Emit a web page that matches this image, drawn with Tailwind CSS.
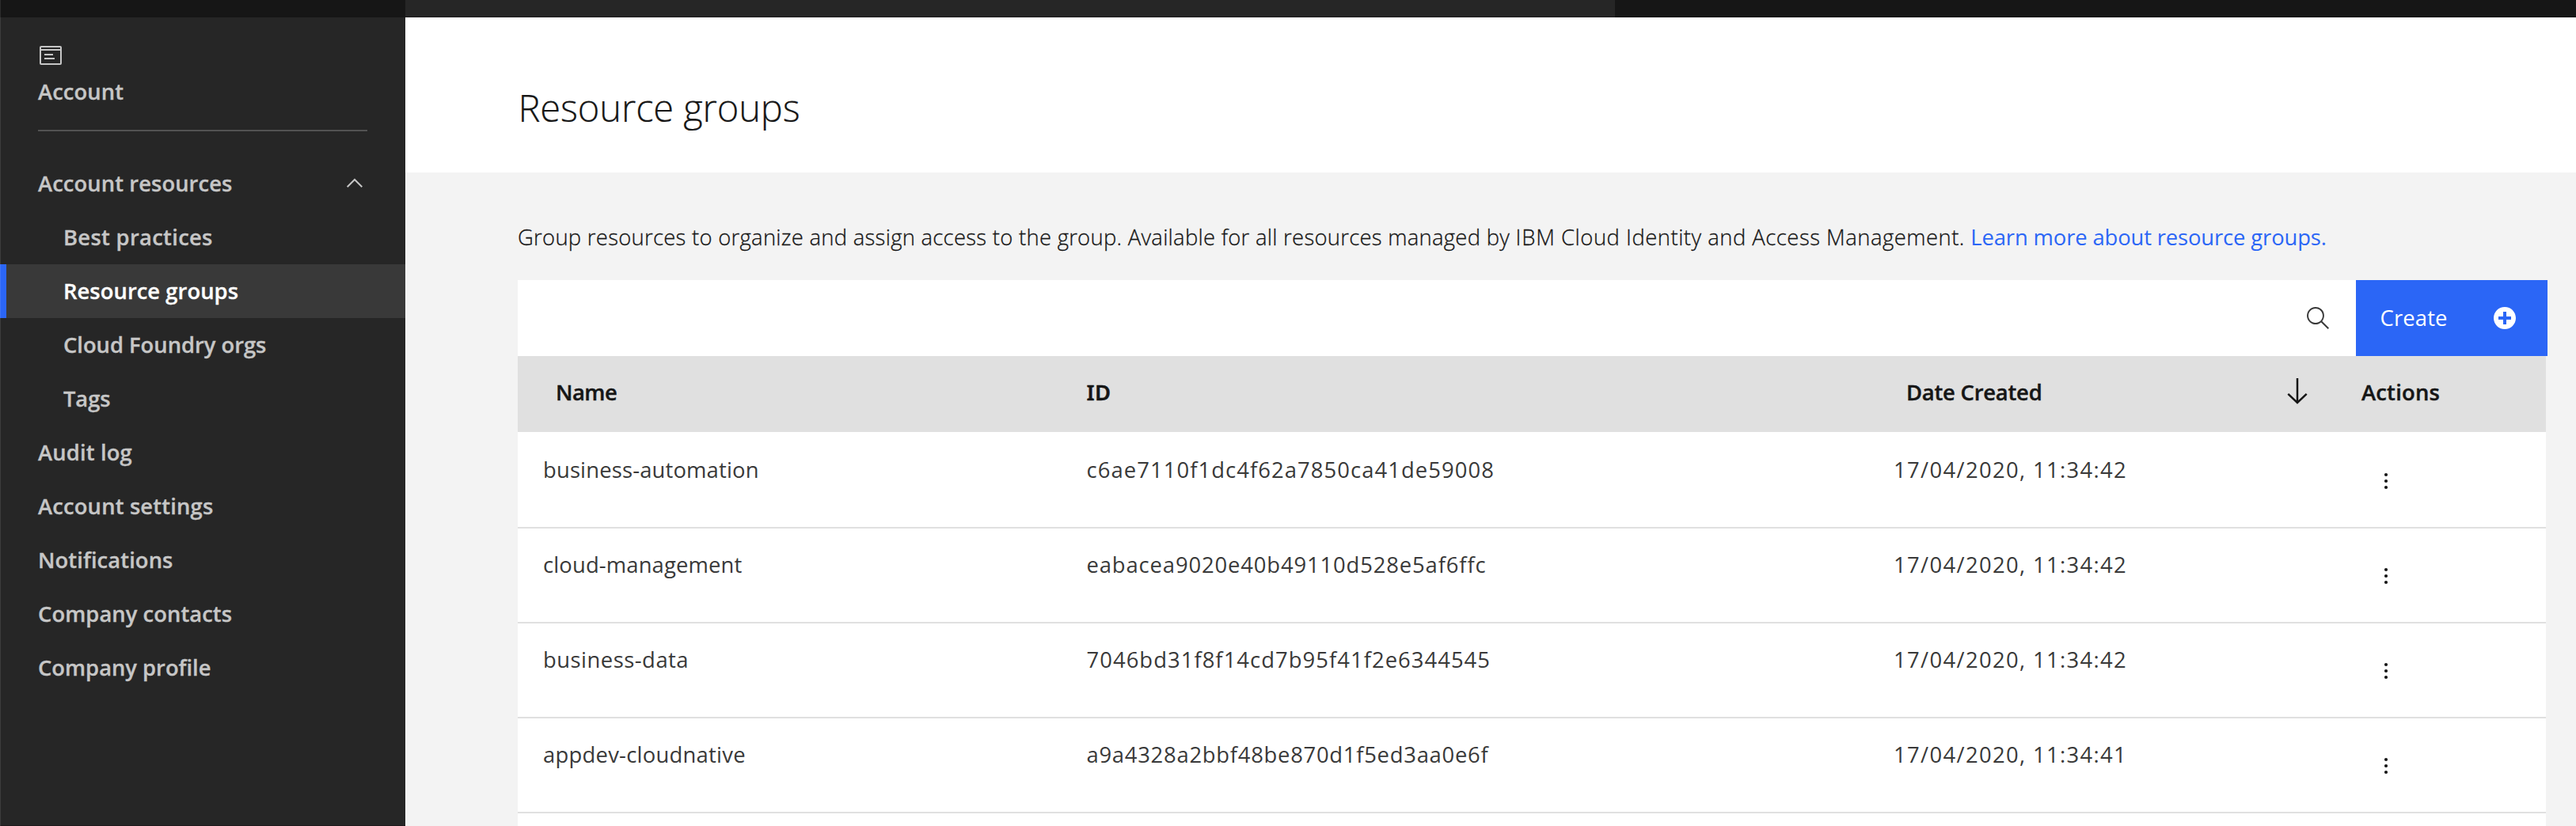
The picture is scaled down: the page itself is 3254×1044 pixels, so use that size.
<!DOCTYPE html>
<html lang="en">
<head>
<meta charset="utf-8">
<title>Resource groups</title>
<script src="https://cdn.jsdelivr.net/npm/@tailwindcss/browser@4"></script>
</head>
<body class="h-[1044px] w-[3254px] overflow-hidden bg-[#f3f3f3] font-['Open_Sans',sans-serif] text-[27.4px] leading-[37px] whitespace-nowrap">
<div class="relative flex h-[1044px] flex-col overflow-hidden">
  <!-- Global header -->
  <header class="flex h-[22px] shrink-0">
    <div class="w-[512px] bg-[#161616]"></div>
    <div class="w-[1528px] border-b border-[#1f1d1f] bg-[#262626]"></div>
    <div class="flex-1 border-b border-[#0f0d0f] bg-[#161616]"></div>
  </header>

  <div class="flex min-h-0 flex-1">
    <!-- Side navigation -->
    <nav class="flex w-[512px] shrink-0 flex-col border-b border-[#1f1a1c] bg-[#262626] font-semibold text-[#c6c6c6] [-webkit-text-stroke:0.3px]">
      <div class="mx-[48px] h-[144px] border-b-2 border-[#525252] pt-[34px]">
        <svg class="block h-[28px] w-[32px]" viewBox="0 0 32 28" fill="none" stroke="currentColor" stroke-width="2">
          <rect x="3" y="3" width="26" height="22" rx="1"/>
          <path d="M3 7h26M8 13h11M8 18h13"/>
        </svg>
        <div class="mt-[13px] tracking-[0.05px]">Account</div>
      </div>
      <div class="mt-[32px] flex h-[68px] justify-between pt-[15px] pr-[48px] pl-[48px]">
        <span class="tracking-[0.06px]">Account resources</span>
        <svg class="mt-[3px] h-[32px] w-[32px]" viewBox="0 0 32 32" fill="none" stroke="currentColor" stroke-width="2"><path d="M6.7 20.3 16 11l9.3 9.3"/></svg>
      </div>
      <a class="h-[68px] pt-[15px] pl-[80px] tracking-[0.29px]">Best practices</a>
      <a class="h-[68px] border-l-8 border-[#2b66f6] bg-[#393939] pt-[15px] pl-[72px] tracking-[0.03px] text-white">Resource groups</a>
      <a class="h-[68px] pt-[15px] pl-[80px] tracking-[-0.04px]">Cloud Foundry orgs</a>
      <a class="h-[68px] pt-[15px] pl-[80px] tracking-[-0.1px]">Tags</a>
      <a class="h-[68px] pt-[15px] pl-[48px] tracking-[0.13px]">Audit log</a>
      <a class="h-[68px] pt-[15px] pl-[48px] tracking-[0.14px]">Account settings</a>
      <a class="h-[68px] pt-[15px] pl-[48px] tracking-[0.07px]">Notifications</a>
      <a class="h-[68px] pt-[15px] pl-[48px] tracking-[0.03px]">Company contacts</a>
      <a class="h-[68px] pt-[15px] pl-[48px] tracking-[-0.03px]">Company profile</a>
    </nav>

    <main class="flex min-w-0 flex-1 flex-col overflow-hidden">
      <div class="h-[196px] shrink-0 bg-white pt-[82px] pl-[142.5px]">
        <h1 class="text-[47px] leading-[64px] font-light tracking-[-0.1px] text-[#161616] [-webkit-text-stroke:0.2px]">Resource groups</h1>
      </div>

      <div class="pt-[63px] pl-[142px]">
        <p class="font-light tracking-[0.29px] text-[#161616] [-webkit-text-stroke:0.3px]">Group resources to organize and assign access to the group. Available for all resources managed by <span class="tracking-[0.8px]">IBM</span> <span class="tracking-[0.51px]">Cloud Identity and Access Management.</span> <a class="font-normal tracking-[-0.13px] text-[#2b66f6] [-webkit-text-stroke:0]">Learn more about resource groups.</a></p>

        <!-- Toolbar -->
        <div class="mt-[36px] flex h-[96px] w-[2564px]">
          <div class="flex flex-1 items-center justify-end bg-white pr-[32px]">
            <svg class="h-[32px] w-[32px] fill-[#393939]" viewBox="0 0 16 16"><path d="M15 14.3 10.7 10c1.9-2.3 1.6-5.8-.7-7.7S4.2.7 2.3 3 .7 8.8 3 10.7c2 1.7 5 1.7 7 0l4.3 4.3.7-.7zM2 6.5C2 4 4 2 6.5 2S11 4 11 6.5 9 11 6.5 11 2 9 2 6.5z"/></svg>
          </div>
          <button class="flex w-[242px] items-start justify-between bg-[#2b66f6] pr-[38px] pl-[30.5px] text-left text-white">
            <span class="pt-[29px] tracking-[0.15px]">Create</span>
            <svg class="mt-[32px] h-[32px] w-[32px] fill-white" viewBox="0 0 16 16"><path d="M8 1C4.1 1 1 4.1 1 8s3.1 7 7 7 7-3.1 7-7-3.1-7-7-7zm4 8H9v3H7V9H4V7h3V4h2v3h3v2z"/></svg>
          </button>
        </div>

        <!-- Table -->
        <div class="w-[2562px]">
          <div class="grid h-[96px] grid-cols-[718px_1019px_592px_1fr] bg-[#e0e0e0] pt-[27px] font-semibold text-[#161616] [-webkit-text-stroke:0.4px]">
            <div class="pl-[48px] tracking-[-0.5px]">Name</div>
            <div class="pl-[0.5px] font-['Noto_Sans'] tracking-[0.37px]">ID</div>
            <div class="flex justify-between pr-[61px] pl-[17px] tracking-[-0.23px]">Date Created
              <svg class="h-[36px] w-[40px]" viewBox="0 0 40 36" fill="none" stroke="currentColor" stroke-width="2.5"><path d="M20 1v31.5M8.3 20.8 20 32l11.7-11.2"/></svg>
            </div>
            <div class="tracking-[0.2px]">Actions</div>
          </div>
          <div id="rows" class="text-[#393939]"></div>
        </div>
      </div>
    </main>
  </div>
  <div class="absolute inset-y-0 left-0 w-px bg-white/10"></div>
</div>
<script>
  const rows = [
    ['business-automation', 0.17, 'c6ae7110f1dc4f62a7850ca41de59008', 1.08, '17/04/2020, 11:34:42'],
    ['cloud-management', 0.15, 'eabacea9020e40b49110d528e5af6ffc', 0.87, '17/04/2020, 11:34:42'],
    ['business-data', 0.50, '7046bd31f8f14cd7b95f41f2e6344545', 1.05, '17/04/2020, 11:34:42'],
    ['appdev-cloudnative', 0.26, 'a9a4328a2bbf48be870d1f5ed3aa0e6f', 0.74, '17/04/2020, 11:34:41'],
    ['', 0, '', 0, ''],
  ];
  document.getElementById('rows').innerHTML = rows.map((r, i) => `
    <div class="grid h-[120px] grid-cols-[718px_1019px_592px_1fr] border-t-2 ${i ? 'border-[#e0e0e0]' : 'border-white'} bg-white pt-[27px]">
      <div class="pl-[32px]" style="letter-spacing:${r[1]}px">${r[0]}</div>
      <div class="pl-[0.5px]" style="letter-spacing:${r[3]}px">${r[2]}</div>
      <div class="pl-[1px] tracking-[1.36px]">${r[4]}</div>
      <div class="pt-[17px] pl-[15px]">${r[0] ? '<svg class="h-[32px] w-[32px] fill-[#161616]" viewBox="0 0 32 32"><circle cx="16" cy="8" r="2.1"/><circle cx="16" cy="16" r="2.1"/><circle cx="16" cy="24" r="2.1"/></svg>' : ''}</div>
    </div>`).join('');
</script>
</body>
</html>
